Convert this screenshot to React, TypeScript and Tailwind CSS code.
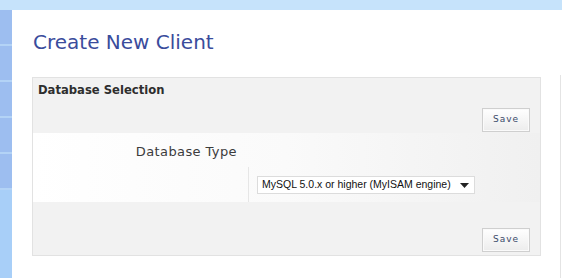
import React from "react";

function SaveButton() {
  return (
    <button className="w-[48px] h-[24px] border border-[#cfcfcf] bg-gradient-to-b from-white to-[#ececec] text-[9px] tracking-[1px] text-[#3a4a6a] font-['DejaVu_Sans',sans-serif] shadow-[inset_0_0_0_1px_#fafafa]">
      Save
    </button>
  );
}

function Sidebar() {
  return (
    <div className="w-[12px] flex flex-col bg-[#a8cff8]">
      {[0, 1, 2, 3, 4].map((i) => (
        <div key={i} className="h-[36px] bg-[#9dbef0] border-b-2 border-[#b3d3f6]" />
      ))}
      <div className="flex-1" />
    </div>
  );
}

export default function App() {
  return (
    <div className="w-[562px] h-[278px] bg-white flex flex-col overflow-hidden">
      <div className="h-[10px] bg-[#c6e3fb] shrink-0" />
      <div className="flex flex-1">
        <Sidebar />
        <div className="flex-1 flex">
          <div className="w-[528px] pl-[20px] pt-[17px]">
            <h1 className="text-[20px] leading-[30px] text-[#3a4c9c] font-['DejaVu_Sans',sans-serif] pl-[1px]">
              Create New Client
            </h1>
            <div className="mt-[20px] w-[509px] border border-[#e2e2e2] bg-[#f2f2f2]">
              <div className="px-[5px] pt-[4px] h-[55px] flex flex-col">
                <div className="text-[11.6px] font-bold text-[#2e2e2e] font-['DejaVu_Sans',sans-serif] leading-[16px]">
                  Database Selection
                </div>
                <div className="flex justify-end pr-[5px] mt-[10px]">
                  <SaveButton />
                </div>
              </div>
              <div className="flex h-[69px] bg-gradient-to-r from-white via-[#fafafa] to-[#f0f0f0]">
                <div className="w-[215px] flex justify-end pr-[11px] pt-[11px]">
                  <span className="text-[13px] leading-[16px] tracking-[0.4px] text-[#3c3c3c] font-['DejaVu_Sans',sans-serif]">
                    Database Type
                  </span>
                </div>
                <div className="flex-1 flex flex-col pt-[34px]">
                  <div className="flex-1 border-l border-[#e6e6e6] pl-[8px] pt-[9px]">
                    <div className="w-[218px] h-[18px] bg-white border border-[#dcdcdc] flex items-center pl-[4px] pr-[5px]">
                      <span className="flex-1 text-[10.5px] text-[#111] font-['Liberation_Sans',Arial,sans-serif] whitespace-nowrap">
                        MySQL 5.0.x or higher (MyISAM engine)
                      </span>
                      <svg width="9" height="5" viewBox="0 0 9 5">
                        <path d="M0 0 H9 L4.5 5 Z" fill="#222" />
                      </svg>
                    </div>
                  </div>
                </div>
              </div>
              <div className="h-[53px] flex justify-end items-end pr-[10px] pb-[3px]">
                <SaveButton />
              </div>
            </div>
          </div>
          <div className="flex-1 flex justify-end pt-[65px]">
            <div className="w-px mr-[1px] bg-[#e4e4e4]" />
          </div>
        </div>
      </div>
    </div>
  );
}
